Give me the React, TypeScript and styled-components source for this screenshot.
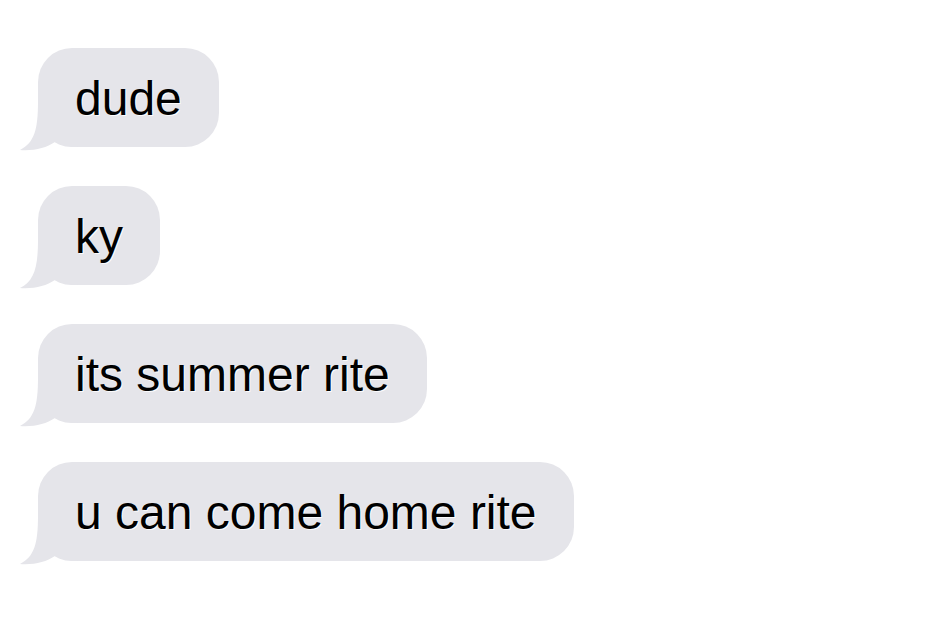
import styled, { createGlobalStyle } from "styled-components";

const messages: string[] = [
  "dude",
  "ky",
  "its summer rite",
  "u can come home rite",
];

const GlobalStyle = createGlobalStyle`
  html, body {
    margin: 0;
    padding: 0;
    background: #ffffff;
  }
`;

const Thread = styled.div`
  display: flex;
  flex-direction: column;
  align-items: flex-start;
  gap: 39px;
  padding: 48px 0 0 38px;
  width: 949px;
  height: 635px;
  box-sizing: border-box;
  overflow: hidden;
`;

const Bubble = styled.div`
  position: relative;
  display: flex;
  align-items: center;
  box-sizing: border-box;
  height: 99px;
  padding: 0 37px;
  border-radius: 34px;
  background: #e5e5ea;
  font-family: "Liberation Sans", Arial, sans-serif;
  font-size: 48px;
  line-height: 1;
  color: #000000;
  text-shadow: 1px 1px 0 rgba(255, 255, 255, 0.9);
  white-space: nowrap;
`;

const Text = styled.span`
  position: relative;
  top: 1px;
`;

const Tail = styled.svg`
  position: absolute;
  left: -20px;
  bottom: -5px;
  width: 80px;
  height: 50px;
  overflow: visible;
`;

const BubbleTail = () => (
  <Tail viewBox="0 0 80 50">
    <path
      d="M20 0 C20 28 16 41 2 48 C16 49 28 46 37 40 C47 45 60 45 78 45 L78 0 Z"
      fill="#e5e5ea"
    />
  </Tail>
);

const App = () => {
  return (
    <>
      <GlobalStyle />
      <Thread>
        {messages.map((m) => (
          <Bubble key={m}>
            <BubbleTail />
            <Text>{m}</Text>
          </Bubble>
        ))}
      </Thread>
    </>
  );
};

export default App;
